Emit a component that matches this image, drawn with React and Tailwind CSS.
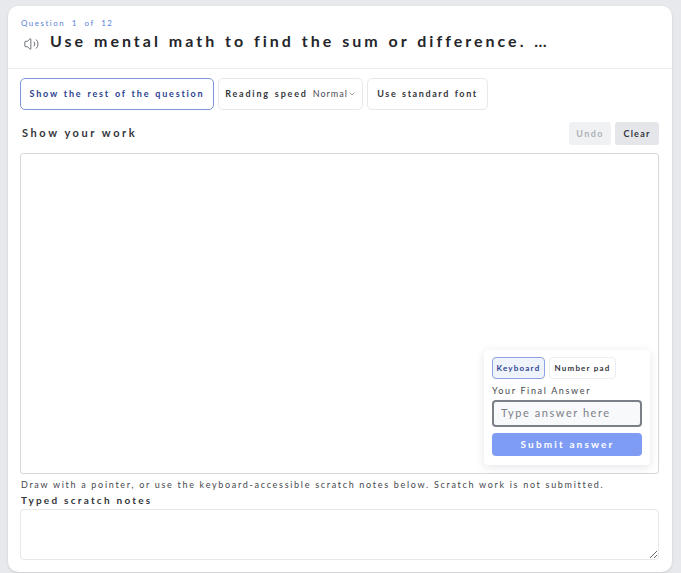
import React from "react";
import { Volume2, ChevronDown } from "lucide-react";

const FONT = "font-['Lato','Noto_Sans',sans-serif]";

const ToolButton = ({ active, children, className = "" }) => (
  <button
    className={`h-[32px] rounded-[5px] border bg-white text-[9px] font-bold tracking-[1.8px] [word-spacing:1px] whitespace-nowrap ${
      active ? "border-[#7f94dc] text-[#2b3f8f]" : "border-[#e6e8ec] text-[#33363c]"
    } ${className}`}
  >
    {children}
  </button>
);

export default function App() {
  return (
    <div className={`${FONT} h-[573px] overflow-hidden bg-[#e8e9ec] pl-[8px] pr-[9px] pt-[6px]`}>
      <div className="h-[566px] rounded-[10px] bg-white shadow-sm">
        {/* HEADER */}
        <header className="h-[63px] border-b border-[#e9ebef] pl-[13px] pt-[12px]">
          <p className="text-[8px] leading-[11px] tracking-[1.5px] [word-spacing:3px] text-[#5b7fd8]">Question 1 of 12</p>
          <div className="mt-[1px] flex items-center">
            <Volume2 className="ml-[2px] mt-[5px] h-[16px] w-[17px] text-[#4a4e57]" strokeWidth={1.2} />
            <h1 className="ml-[10px] text-[16px] leading-[22px] font-bold tracking-[3px] [word-spacing:1px] text-[#24262b] whitespace-nowrap">
              Use mental math to find the sum or difference. …
            </h1>
          </div>
        </header>

        <div className="pl-[12px] pr-[13px]">
          {/* TOOLBAR */}
          <div className="mt-[9px] flex gap-[4px]">
            <ToolButton active className="w-[194px]">Show the rest of the question</ToolButton>
            <ToolButton className="flex w-[145px] items-center justify-center">
              Reading speed
              <span className="ml-[5px] font-normal tracking-[1px] text-[#4a4d54]">Normal</span>
              <ChevronDown className="h-[8px] w-[8px] text-[#6b6f77]" />
            </ToolButton>
            <ToolButton className="w-[121px]"><span className="tracking-[1.6px]">Use standard font</span></ToolButton>
          </div>

          {/* SHOW YOUR WORK */}
          <div className="mt-[12px] flex items-center justify-between">
            <h2 className="pl-[2px] text-[11px] font-bold tracking-[2.6px] text-[#33363c]">Show your work</h2>
            <div className="flex gap-[4px]">
              <button className="h-[23px] w-[42px] rounded-[3px] bg-[#f0f1f3] text-[9px] font-bold tracking-[1.4px] text-[#aeb1b7]">Undo</button>
              <button className="h-[23px] w-[44px] rounded-[3px] bg-[#e5e6ea] text-[9px] font-bold tracking-[1.2px] text-[#33363c]">Clear</button>
            </div>
          </div>

          {/* CANVAS */}
          <div className="relative mt-[8px] h-[321px] rounded-[3px] border border-[#d6d8dc] bg-white">
            <div className="absolute top-[196px] right-[8px] flex h-[115px] w-[166px] flex-col rounded-[4px] bg-white px-[8px] pt-[7px] shadow-[0_2px_10px_rgba(30,40,70,0.12)]">
              <div className="flex gap-[4px]">
                <button className="h-[22px] w-[53px] rounded-[4px] border border-[#8ea2e0] bg-[#eff3fc] text-[8px] font-bold tracking-[1.2px] text-[#2b3f8f]">Keyboard</button>
                <button className="h-[22px] w-[67px] rounded-[4px] border border-[#eceef1] bg-white text-[8px] font-bold tracking-[1.2px] text-[#33363c]">Number pad</button>
              </div>
              <label className="mt-[6px] text-[9px] leading-[11px] tracking-[1.65px] text-[#44474d]">Your Final Answer</label>
              <div className="mt-[4px] flex h-[27px] items-center rounded-[4px] border-2 border-[#7b7f88] bg-[#f8f9fb] px-[7px] text-[11px] tracking-[1.55px] text-[#7c8088]">
                Type answer here
              </div>
              <button className="mt-[6px] h-[23px] rounded-[4px] bg-[#7f9cf5] pl-[1px] text-[10px] font-bold tracking-[2.15px] text-white">Submit answer</button>
            </div>
          </div>

          {/* NOTES */}
          <p className="mt-[5px] pl-[1px] text-[9px] leading-[11px] tracking-[1.7px] whitespace-nowrap text-[#44474d]">
            Draw with a pointer, or use the keyboard-accessible scratch notes below. Scratch work is not submitted.
          </p>
          <label className="mt-[4px] block pl-[1px] text-[10px] leading-[12px] font-bold tracking-[2.25px] text-[#33363c]">Typed scratch notes</label>
          <textarea className="mt-[3px] block h-[51px] w-full rounded-[4px] border border-[#e6e8ec] bg-white" />
        </div>
      </div>
    </div>
  );
}
